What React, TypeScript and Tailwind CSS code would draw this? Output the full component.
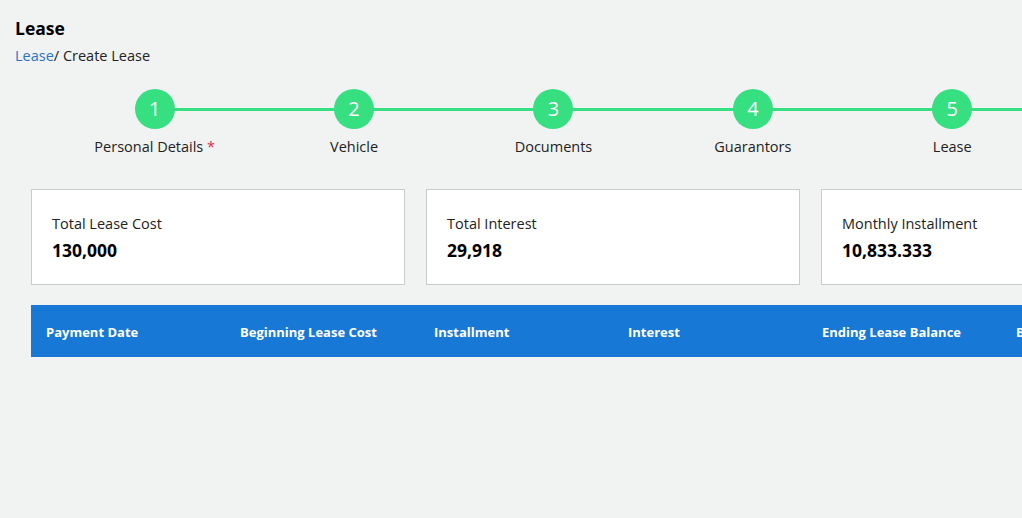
import React from 'react';

const steps = ['Personal Details', 'Vehicle', 'Documents', 'Guarantors', 'Lease'];

const stats = [
  { label: 'Total Lease Cost', value: '130,000' },
  { label: 'Total Interest', value: '29,918' },
  { label: 'Monthly Installment', value: '10,833.333' },
];

const columns = [
  'Payment Date',
  'Beginning Lease Cost',
  'Installment',
  'Interest',
  'Ending Lease Balance',
  'Balance',
];

/** Numbered step with connector line running on to the next one. */
const Step: React.FC<{ index: number; label: string }> = ({ index, label }) => (
  <div className="relative flex w-[199.4px] shrink-0 flex-col items-center">
    <div className="absolute left-1/2 top-[19px] h-[3px] w-full bg-[#36df80]" />
    <div className="relative z-10 flex h-10 w-10 items-center justify-center rounded-full bg-[#36df80] text-[20px] text-white">
      {index + 1}
    </div>
    <div className="mt-[8px] text-[14.5px] leading-[20px] text-[#222]">
      {label}
      {index === 0 && <span className="text-[#e0283a]"> *</span>}
    </div>
  </div>
);

export default function App() {
  return (
    <div
      className="min-h-[518px] w-full overflow-hidden bg-[#f1f2f2] text-[#222]"
      style={{ fontFamily: '"Open Sans", "Noto Sans", sans-serif' }}
    >
      <div className="px-[15px] pt-[16px]">
        <h1 className="text-[17.5px] font-bold leading-[24px] text-black">Lease</h1>
        <div className="mt-[6px] text-[14.5px] leading-[20px]">
          <span className="text-[#2a72c4]">Lease</span>/ Create Lease
        </div>
      </div>

      <div className="ml-[55px] mt-[23px] flex">
        {steps.map((s, i) => (
          <Step key={s} index={i} label={s} />
        ))}
      </div>

      <div className="ml-[31px] mt-[32px] flex gap-[21px]">
        {stats.map((s) => (
          <div
            key={s.label}
            className="h-[96px] w-[374px] shrink-0 border border-[#c9cccc] bg-white pl-[20px] pt-[24px]"
          >
            <div className="text-[14.5px] leading-[20px] text-[#222]">{s.label}</div>
            <div className="mt-[4px] text-[17.5px] font-bold leading-[24px] text-black">{s.value}</div>
          </div>
        ))}
      </div>

      <div className="ml-[31px] mt-[20px] flex h-[52px] items-center bg-[#1878d5] pt-[3px]">
        {columns.map((c) => (
          <div key={c} className="w-[194px] shrink-0 pl-[15px] text-[13px] font-bold text-white">
            {c}
          </div>
        ))}
      </div>
    </div>
  );
}
